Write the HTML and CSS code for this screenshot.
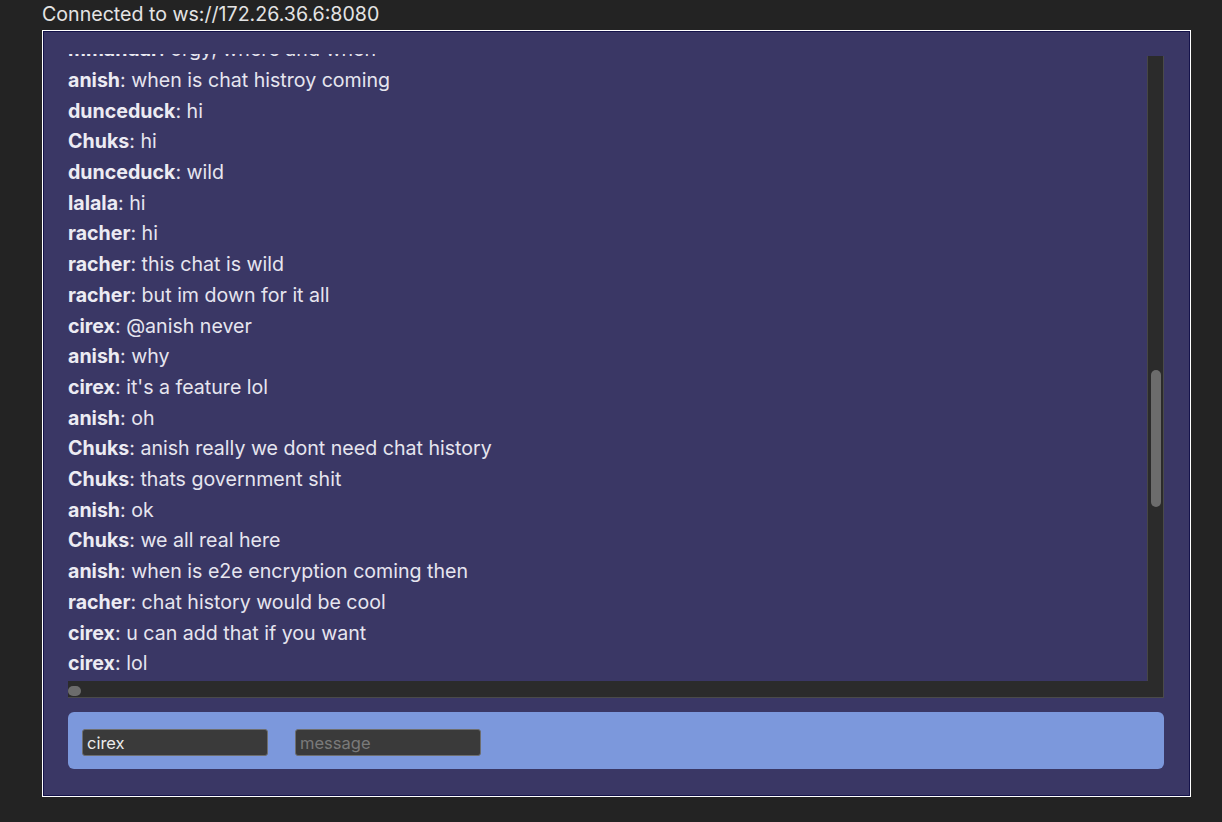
FILE: index.html
```html
<!DOCTYPE html>
<html>
<head>
<meta charset="utf-8">
<link rel="stylesheet" href="styles.css">
</head>
<body>
<div class="status">Connected to ws://172.26.36.6:8080</div>
<div class="app">
  <div class="chat">
    <div class="messages">
      <div class="msg"><b>cirex</b>: hello</div>
      <div class="msg"><b>mmandar</b>: orgy, where and when</div>
      <div class="msg"><b>anish</b>: when is chat histroy coming</div>
      <div class="msg"><b>dunceduck</b>: hi</div>
      <div class="msg"><b>Chuks</b>: hi</div>
      <div class="msg"><b>dunceduck</b>: wild</div>
      <div class="msg"><b>lalala</b>: hi</div>
      <div class="msg"><b>racher</b>: hi</div>
      <div class="msg"><b>racher</b>: this chat is wild</div>
      <div class="msg"><b>racher</b>: but im down for it all</div>
      <div class="msg"><b>cirex</b>: @anish never</div>
      <div class="msg"><b>anish</b>: why</div>
      <div class="msg"><b>cirex</b>: it's a feature lol</div>
      <div class="msg"><b>anish</b>: oh</div>
      <div class="msg"><b>Chuks</b>: anish really we dont need chat history</div>
      <div class="msg"><b>Chuks</b>: thats government shit</div>
      <div class="msg"><b>anish</b>: ok</div>
      <div class="msg"><b>Chuks</b>: we all real here</div>
      <div class="msg"><b>anish</b>: when is e2e encryption coming then</div>
      <div class="msg"><b>racher</b>: chat history would be cool</div>
      <div class="msg"><b>cirex</b>: u can add that if you want</div>
      <div class="msg"><b>cirex</b>: lol</div>
    </div>
    <div class="vtrack"><div class="vthumb"></div></div>
    <div class="htrack"><div class="hthumb"></div></div>
    <div class="corner"></div>
  </div>
  <form class="composer">
    <input class="field" type="text" value="cirex">
    <input class="field" type="text" placeholder="message">
  </form>
</div>
</body>
</html>
```

FILE: styles.css
```css
html, body {
  margin: 0;
  padding: 0;
  background: #232323;
  font-family: Inter, "Noto Sans", sans-serif;
}
body {
  padding-left: 42px;
}
.status {
  height: 30px;
  line-height: 29px;
  font-size: 19.6px;
  color: #e4e4e4;
  white-space: nowrap;
}
.app {
  width: 1096px;
  height: 716px;
  padding: 23px 26px 26px 25px;
  border: 1px solid #ffffff;
  box-shadow: inset 0 0 0 1px #14124a;
  background: #3a3765;
  display: flex;
  flex-direction: column;
  gap: 14px;
}
.chat {
  height: 644px;
  display: grid;
  grid-template-columns: 1fr 17px;
  grid-template-rows: 1fr 17px;
}
.messages {
  overflow: hidden;
  display: flex;
  flex-direction: column;
  justify-content: flex-end;
  padding-bottom: 2px;
  color: #e6e5ef;
  font-size: 19.6px;
}
.msg {
  line-height: 30.7px;
  white-space: nowrap;
}
.msg b {
  font-weight: 700;
  color: #ecebf3;
}
.vtrack {
  margin-top: 2px;
  background: #2b2b2b;
  border-left: 1px solid #464646;
  border-right: 1px solid #4a4a4a;
  box-sizing: border-box;
  padding: 314px 2px 0 3px;
}
.vthumb {
  height: 137px;
  border-radius: 6px;
  background: #6c6c6c;
}
.htrack {
  background: #2b2b2b;
  border-bottom: 1px solid #4a4a4a;
  box-sizing: border-box;
  padding: 5px 0 0 0;
}
.hthumb {
  width: 13px;
  height: 10px;
  border-radius: 5px;
  background: #6c6c6c;
}
.corner {
  background: #2b2b2b;
  border-right: 1px solid #4a4a4a;
  border-bottom: 1px solid #4a4a4a;
}
.composer {
  margin: 0;
  height: 57px;
  box-sizing: border-box;
  padding: 17px 14px 0 14px;
  background: #7c98dc;
  border-radius: 6px;
  display: flex;
  align-items: flex-start;
  gap: 27px;
}
.field {
  width: 186px;
  height: 27px;
  box-sizing: border-box;
  margin: 0;
  padding: 0 4px;
  background: #3a3a3a;
  border: 1px solid #6e6e6e;
  border-radius: 3px;
  color: #ececec;
  font-family: Inter, "Noto Sans", sans-serif;
  font-size: 16.5px;
  outline: none;
}
.field::placeholder {
  color: #7a7a7a;
}
```
